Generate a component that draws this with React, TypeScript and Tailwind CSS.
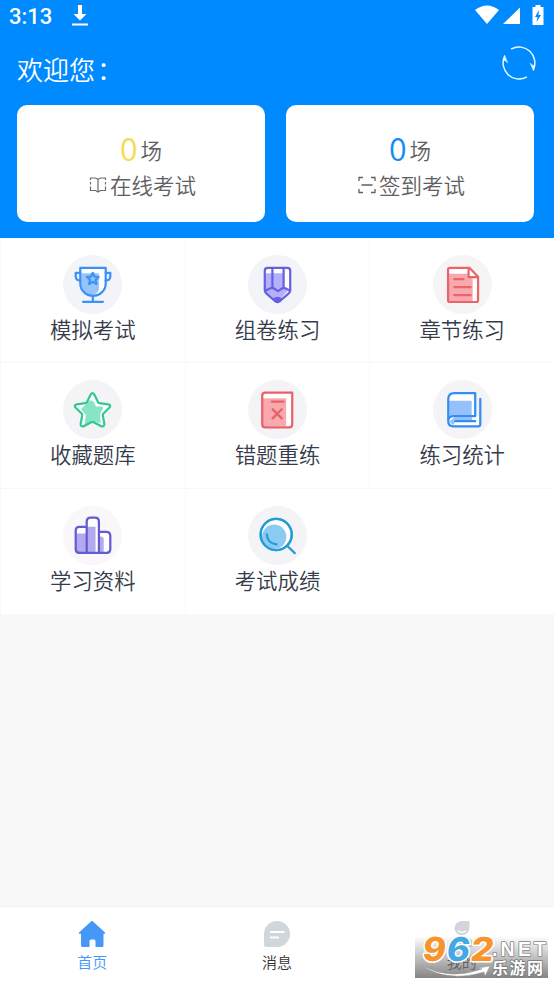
import type { ReactNode } from 'react';

interface MenuItem {
  label: string;
  icon: ReactNode;
  circle: string;
}

function TrophyIcon() {
  return (
    <g stroke="#3a92f8" strokeWidth="2.2" strokeLinejoin="round" strokeLinecap="round" fill="none">
      <path d="M17 12.700h25v15c0 7-5.500 12.300-12.500 12.300S17 34.700 17 27.700z" fill="#fff" stroke="none" />
      <path d="M18 18h17.300v15c0 3-3 5.500-6 6-6.500 0-11.300-5-11.300-11z" fill="#95c4fb" stroke="none" />
      <path d="M17 12.700h25v15c0 7-5.500 12.300-12.500 12.300S17 34.700 17 27.700z" />
      <path d="M17 17.500h-4.500v4q.5 3.500 4.500 3.700M42 17.500h4.500v4q-.5 3.500-4.500 3.700M29.300 40.500v5M19.700 46h19.600" />
      <path d="m29.300 17.500 1.700 3.700 4 .4-3 2.800.9 4.100-3.600-2.100-3.600 2.100.9-4.100-3-2.800 4-.4z" />
    </g>
  );
}

function PencilIcon() {
  return (
    <g stroke="#6661e0" strokeWidth="2.200" strokeLinejoin="round" strokeLinecap="round" fill="none">
      <path d="M16.500 15.500q0-2.800 2.800-2.800h19.400q2.800 0 2.800 2.800v19.500q0 1.500-1.500 2.700l-9 7.800q-2 1.300-4 0l-9-7.800q-1.500-1.200-1.500-2.700z" fill="#fff" stroke="none" />
      <path d="M17 18h18v14.500l4 3-8 8.500h-4l-10-8.500z" fill="#b4b0fb" stroke="none" />
      <path d="M16.500 15.500q0-2.800 2.800-2.800h19.400q2.800 0 2.800 2.800v19.500q0 1.500-1.500 2.700l-9 7.800q-2 1.300-4 0l-9-7.800q-1.500-1.200-1.500-2.700z" />
      <path d="M24 13v19.500M35 13v19.500M17 35l3.500-1.500 3.500-1.500 5.500 3.500 5.500-3.500 6 3" />
      <path d="M25.500 43.500q3.500-2.500 7 0l-3.500 2.700z" fill="#6661e0" />
    </g>
  );
}

function DocumentIcon() {
  return (
    <g stroke="#ea646c" strokeWidth="2.200" strokeLinejoin="round" strokeLinecap="round" fill="none">
      <path d="M16.500 12.700H36l8.300 8.700V44.500q0 1.700-1.700 1.700H16.500q-1.700 0-1.700-1.700V14.400q0-1.700 1.700-1.700z" fill="#fff" stroke="none" />
      <path d="M15.500 18.500H34.500v4H39v23H15.500z" fill="#f9a8ad" stroke="none" />
      <path d="M16.500 12.700H36l8.300 8.700V44.500q0 1.700-1.700 1.700H16.500q-1.700 0-1.700-1.700V14.400q0-1.700 1.700-1.700z" />
      <path d="M35 13v8.700h9M21 23.700h9M21 31.500h16M21 39.500h16" />
    </g>
  );
}

function StarIcon() {
  const star =
    'M27.200 14.300q1.800-2.800 3.600 0l3.700 7.500q.4.800 1.300.9l8.700 1.200q3 .8 1.200 3.200l-6 5.900q-.8.800-.6 1.800l1.500 8.200q.2 3.200-2.900 2.500l-7.500-3.900q-1.200-.6-2.400 0l-7.500 3.900q-3.100.7-2.900-2.500l1.500-8.200q.2-1-.6-1.800l-6-5.900q-1.800-2.400 1.200-3.200l8.700-1.200q.9-.1 1.300-.9z';
  return (
    <g stroke="#31c893" strokeWidth="2.200" strokeLinejoin="round" fill="none">
      <path d={star} fill="#fff" stroke="none" />
      <path d="m22 24.500 4-4q2-1.500 4 1l2.500 4.500h6l1 2-3 5.500.5 9-7.500-2-8.500 4 1.500-10-5-6z" fill="#86e5c3" stroke="none" />
      <path d={star} />
    </g>
  );
}

function WrongBookIcon() {
  return (
    <g stroke="#e6616b" strokeWidth="2.200" strokeLinejoin="round" strokeLinecap="round" fill="none">
      <path d="M17 12.500h26.500v31q0 3-3 3H17q-3 0-3-3v-28q0-3 3-3z" fill="#fff" stroke="none" />
      <path d="M14.500 18H37.500v27.500H14.500z" fill="#f9a8ad" stroke="none" />
      <path d="M17 12.500h26.500v31q0 3-3 3H17q-3 0-3-3v-28q0-3 3-3z" />
      <path d="M23.500 21.300h11.500M24.200 28.700l9 9M33.200 28.700l-9 9" />
    </g>
  );
}

function BlueBookIcon() {
  return (
    <g stroke="#348cf5" strokeWidth="2.200" strokeLinejoin="round" strokeLinecap="round" fill="none">
      <path d="M15 40V19q0-6 6-6h20.500v22.500h5v8q0 2-2 2H20q-5 0-5-5z" fill="#fff" stroke="none" />
      <path d="M16 20.500h22v14H20l-4 2zM16 41l5-4.500h17l1 3-17 1-2 4z" fill="#94c1fb" stroke="none" />
      <path d="M15 40V19q0-6 6-6h20.500v22.500H20q-5 0-5 5t5 5h24.500q2 0 2-2V18.500M22 40.500h19.500" />
    </g>
  );
}

function ShelfIcon() {
  return (
    <g stroke="#635bd1" strokeWidth="2.200" strokeLinejoin="round" fill="none">
      <path d="M12.500 24q0-3.500 3.500-3.500h7.300v-5q0-4 4-4h4q4 0 4 4v10h7.200q4 0 4 4v13q0 3.500-3.500 3.500H16q-3.500 0-3.500-3.500z" fill="#fff" stroke="none" />
      <path d="M13 27h10v-6.500h9V46H16q-3 0-3-3zM36 30h1q3 0 3 3v13h-4z" fill="#b1abed" stroke="none" />
      <path d="M23.300 20.500H16q-3.500 0-3.500 3.500v18.500q0 3.500 3.500 3.500h27q3.500 0 3.500-3.500v-13q0-4-4-4h-7.200" />
      <path d="M23.300 46V15.500q0-4 4-4h4q4 0 4 4V46" />
    </g>
  );
}

function SearchIcon() {
  return (
    <g stroke="#249cd8" strokeWidth="2.200" strokeLinecap="round" fill="none">
      <circle cx="27.700" cy="28" r="15.300" fill="#fff" />
      <circle cx="25.700" cy="30.300" r="12" fill="#8bcbf0" stroke="none" />
      <circle cx="27.700" cy="28" r="15.300" />
      <path d="M18.500 28q.7 8.700 9.500 9.700M39 39.500l7 6.800" />
    </g>
  );
}

const menuItems: MenuItem[] = [
  { label: '模拟考试', icon: <TrophyIcon />, circle: '#f3f4f7' },
  { label: '组卷练习', icon: <PencilIcon />, circle: '#f3f4f7' },
  { label: '章节练习', icon: <DocumentIcon />, circle: '#f6f5f4' },
  { label: '收藏题库', icon: <StarIcon />, circle: '#f4f4f7' },
  { label: '错题重练', icon: <WrongBookIcon />, circle: '#f4f4f7' },
  { label: '练习统计', icon: <BlueBookIcon />, circle: '#f4f4f7' },
  { label: '学习资料', icon: <ShelfIcon />, circle: '#f9f7f9' },
  { label: '考试成绩', icon: <SearchIcon />, circle: '#f4f4f7' },
];

function StatusBar() {
  return (
    <div className="flex h-8 items-center justify-between pl-[9px] pr-[10px] text-white">
      <div className="flex items-center gap-5">
        <span className="pt-px font-[Roboto,sans-serif] text-[22px] font-medium leading-8">3:13</span>
        <svg width="16" height="22" viewBox="0 0 16 22" fill="#fff">
          <path d="M6 0h4v9h4.500L8 15.500 1.500 9H6zM0 18.500h16v2H0z" />
        </svg>
      </div>
      <svg width="69" height="22" viewBox="0 0 69 22" fill="#fff">
        <path d="M0 5Q12-4 24 5L12 19zM45 2.500V19H28zM57.500 2h3V0h5v2h3v18h-11z" />
        <path d="m64 5-4 7h2.500l-1 5 4.500-7h-2.500z" fill="#008aff" />
      </svg>
    </div>
  );
}

function RefreshIcon() {
  return (
    <svg width="36" height="36" viewBox="0 0 36 36" fill="none" stroke="#f0fcff" strokeWidth="1.400" strokeLinecap="round" strokeLinejoin="round">
      <path d="M10.500 3.800A16 16 0 0 1 32.500 24.500M25.500 32.200A16 16 0 0 1 3.500 11.500" />
      <path d="m29.500 18.500 2.500 2 2 0-1.500 5zM6.500 17.500l-2.500-2-2 0 1.500-5z" fill="#f0fcff" strokeWidth="0.500" />
    </svg>
  );
}

function BookIcon() {
  return (
    <svg width="18" height="18" viewBox="0 0 18 18" fill="none" stroke="#6b6b6b" strokeWidth="1.200">
      <path d="M1.500 4V2h4q3.500 0 3.500 2.500Q9 2 12.500 2h4v2M1.500 6v2.500M16.500 6v2.500M1.500 10.500v4h5L9 16l2.500-1.500h5v-4M9 4.500V16" />
    </svg>
  );
}

function ScanIcon() {
  return (
    <svg width="18" height="18" viewBox="0 0 18 18" fill="none" stroke="#606060" strokeWidth="1.300">
      <path d="M5 1.500H1V5M13 1.500h4V5M1 13v3.500h4M17 13v3.500h-4M3.500 9h11" />
    </svg>
  );
}

interface ExamCardProps {
  label: string;
  icon: ReactNode;
  countClass: string;
}

function ExamCard({ label, icon, countClass }: ExamCardProps) {
  return (
    <div className="flex h-[117px] flex-1 flex-col items-center rounded-[10px] bg-white pt-[25px] text-[#606060]">
      <div className="flex h-[37px] items-start gap-[3px]">
        <span className={`text-[32px] leading-[35px] ${countClass}`}>0</span>
        <span className="text-[21.5px] leading-[40px]">场</span>
      </div>
      <div className="flex h-9 items-center gap-[3px] pl-[3px] text-[21.5px] leading-9">
        {icon}
        <span>{label}</span>
      </div>
    </div>
  );
}

function Watermark() {
  return (
    <svg className="absolute left-[415px] top-[936px] overflow-visible" width="133" height="42" viewBox="0 0 133 42">
      <defs>
        <linearGradient id="shade" x1="0" y1="0" x2="0" y2="1">
          <stop offset="0" stopColor="#777" stopOpacity="0" />
          <stop offset="1" stopColor="#777" stopOpacity="0.9" />
        </linearGradient>
      </defs>
      <rect width="133" height="42" fill="url(#shade)" />
      <path d="M6 29Q34 45 67 33l-4-1 12-2-5 10-1-4Q32 47 6 29z" fill="#fff" stroke="#999" strokeWidth="0.500" />
      <g fontWeight="bold" stroke="#fff" strokeWidth="3" strokeLinejoin="round" paintOrder="stroke">
        <g fontSize="33" fontWeight="800" fontFamily="Inter, sans-serif" transform="translate(4 0) skewX(-8)">
          <text x="6" y="25" fill="#f7942b" textLength="23" lengthAdjust="spacingAndGlyphs">9</text>
          <text x="30" y="25" fill="#43a9e4" textLength="23" lengthAdjust="spacingAndGlyphs">6</text>
          <text x="54" y="25" fill="#f7942b" textLength="23" lengthAdjust="spacingAndGlyphs">2</text>
        </g>
        <text x="77" y="19.500" fontSize="19.500" fill="#fff" stroke="#858585" strokeWidth="1.600" textLength="54" lengthAdjust="spacing" fontFamily="Liberation Sans, sans-serif">.NET</text>
        <text x="77" y="37.500" fontSize="16" fill="#fff" stroke="#777" strokeWidth="1.600" textLength="51" fontFamily="Noto Sans CJK SC, sans-serif">乐游网</text>
      </g>
    </svg>
  );
}

function App() {
  return (
    <div className="relative flex h-[984px] w-[554px] flex-col overflow-hidden bg-[#f8f8f8] font-['Noto_Sans_CJK_SC',sans-serif] font-[350]">
      <header className="h-[238px] bg-[#008aff]">
        <StatusBar />
        <div className="flex h-[73px] items-start justify-between pl-[17px] pr-[17px] pt-[13px]">
          <h1 className="pt-[5px] text-[26px] leading-[38px] text-white">
            欢迎您<span className="ml-0.5">：</span>
          </h1>
          <RefreshIcon />
        </div>
        <div className="flex gap-[21px] pl-[17px] pr-5">
          <ExamCard label="在线考试" icon={<BookIcon />} countClass="text-[#f8da50]" />
          <ExamCard label="签到考试" icon={<ScanIcon />} countClass="text-[#148bf5]" />
        </div>
      </header>

      <main className="grid h-[376px] grid-cols-3 grid-rows-3 bg-white">
        {menuItems.map((item, i) => (
          <div
            key={item.label}
            className={`flex flex-col items-center border-l border-[#f8f8f8] pt-[17px] ${i < 6 ? 'border-b' : ''}`}
          >
            <svg width="59" height="59" viewBox="0 0 58 58" className="shrink-0">
              <circle cx="29" cy="29" r="29" fill={item.circle} />
              {item.icon}
            </svg>
            <span className="text-[21.4px] leading-[30px] text-[#353b4b]">{item.label}</span>
          </div>
        ))}
      </main>

      <nav className="mt-auto grid h-[78px] grid-cols-3 border-t border-[#f0f0f0] bg-white pt-[13px] text-[15px] leading-[22px] text-[#333]">
        <div className="flex flex-col items-center gap-[3px] text-[#4698f8]">
          <svg width="28" height="28" viewBox="0 0 28 28" fill="#4698f8">
            <path d="M12.700 1.700q1.300-1.300 2.600 0L27 12.500q.7 1.200-.7 1.300H25.500V25.500q0 1.500-1.500 1.500h-6.500v-6q0-1.500-1.500-1.500h-3q-1.500 0-1.500 1.500v6H4.500Q3 27 3 25.500V13.800H1.700q-1.400-.1-.7-1.300z" />
          </svg>
          <span>首页</span>
        </div>
        <div className="flex flex-col items-center gap-[3px]">
          <svg width="28" height="28" viewBox="0 0 28 28">
            <path d="M14 1a13 13 0 0 1 0 26H3q-2 0-2-2V14A13 13 0 0 1 14 1z" fill="#d1d6dd" />
            <path d="M8 12h12.500M8 17.500h7" stroke="#fff" strokeWidth="2.200" strokeLinecap="round" />
          </svg>
          <span>消息</span>
        </div>
        <div className="flex flex-col items-center gap-[3px]">
          <svg width="28" height="28" viewBox="0 0 28 28">
            <path d="M14 1h7.500v6.500a7.500 7 0 1 1-7.500-6.500zM3 27v-3q0-6 6-6h10q6 0 6 6v3z" fill="#d1d6dd" />
            <path d="M10.500 11q3.500 3 7 0" fill="none" stroke="#fff" strokeWidth="1.500" strokeLinecap="round" />
          </svg>
          <span>我的</span>
        </div>
      </nav>
      <Watermark />
    </div>
  );
}

export default App;
